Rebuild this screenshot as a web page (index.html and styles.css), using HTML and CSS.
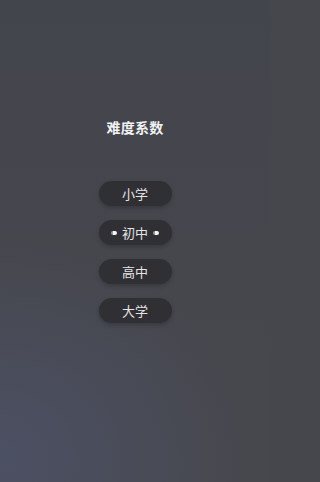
FILE: index.html
```html
<!DOCTYPE html>
<html lang="zh">
<head>
<meta charset="utf-8">
<meta name="viewport" content="width=270">
<link rel="stylesheet" href="styles.css">
</head>
<body>
<main class="screen">
  <h1 class="title">难度系数</h1>
  <div class="levels">
    <button class="level">小学</button>
    <button class="level selected"><span class="mark"></span>初中<span class="mark"></span></button>
    <button class="level">高中</button>
    <button class="level">大学</button>
  </div>
</main>
</body>
</html>
```
FILE: styles.css
```css
html, body {
  margin: 0;
  padding: 0;
  height: 100%;
  background: #46474d;
}
body {
  font-family: "Noto Sans CJK SC", "Noto Sans", sans-serif;
}
.screen {
  width: 270px;
  height: 482px;
  display: flex;
  flex-direction: column;
  align-items: center;
  padding-top: 117px;
  box-sizing: border-box;
  background:
    radial-gradient(ellipse 90% 45% at 0% 95%, rgba(80, 88, 120, 0.5), rgba(80, 88, 120, 0) 100%),
    linear-gradient(180deg, #43454d 0%, #46474d 55%, #47484e 100%);
}
.title {
  margin: 0;
  font-size: 14px;
  line-height: 20px;
  font-weight: 700;
  color: #f2f2f4;
  letter-spacing: 0.2px;
}
.levels {
  margin-top: 44px;
  display: flex;
  flex-direction: column;
  align-items: center;
  gap: 14px;
}
.level {
  width: 73px;
  height: 25px;
  border: none;
  border-radius: 13px;
  background: #303034;
  color: #e4e4e6;
  font-family: inherit;
  font-size: 13px;
  line-height: 25px;
  padding: 0;
  display: flex;
  align-items: center;
  justify-content: center;
  gap: 5px;
  box-shadow: 0 2px 4px rgba(0, 0, 0, 0.22);
}
.mark {
  width: 6px;
  height: 4px;
  border-radius: 2px;
  background: linear-gradient(90deg, #9a9a9e 0 2px, #f4f4f4 2px);
}
```
